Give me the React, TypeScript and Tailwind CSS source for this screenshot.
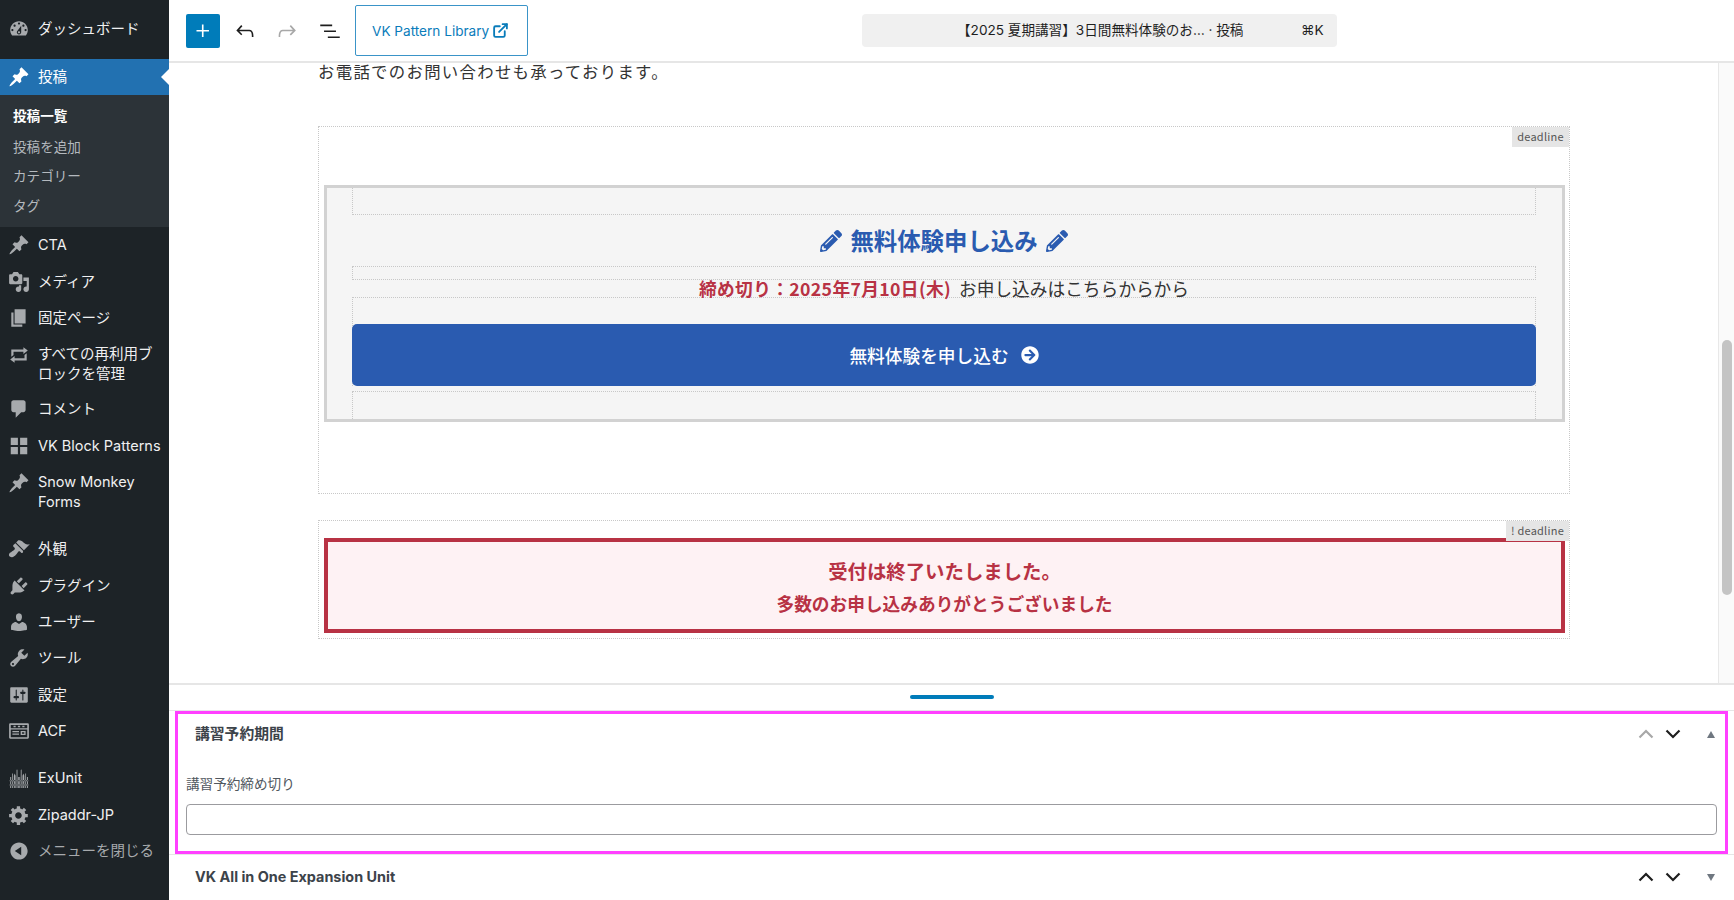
import React from "react";
import { FaPencilAlt, FaArrowCircleRight } from "react-icons/fa";
import { ExternalLink } from "lucide-react";

const D: Record<string, string> = {
  dashboard: "M3.76 16h12.48c1.1-1.37 1.76-3.11 1.76-5 0-4.42-3.58-8-8-8s-8 3.58-8 8c0 1.89.66 3.63 1.76 5zM10 4c.55 0 1 .45 1 1s-.45 1-1 1-1-.45-1-1 .45-1 1-1zM6 6c.55 0 1 .45 1 1s-.45 1-1 1-1-.45-1-1 .45-1 1-1zm8 0c.55 0 1 .45 1 1s-.45 1-1 1-1-.45-1-1 .45-1 1-1zm-5.37 5.55L12 7v6c0 1.1-.9 2-2 2s-2-.9-2-2c0-.57.24-1.08.63-1.45zM4 10c.55 0 1 .45 1 1s-.45 1-1 1-1-.45-1-1 .45-1 1-1zm12 0c.55 0 1 .45 1 1s-.45 1-1 1-1-.45-1-1 .45-1 1-1zm-5 3c0-.55-.45-1-1-1s-1 .45-1 1 .45 1 1 1 1-.45 1-1z",
  pin: "M10.44 3.02l1.82-1.82 6.36 6.35-1.83 1.82c-1.05-.68-2.48-.57-3.41.36l-.75.75c-.92.93-1.04 2.35-.35 3.41l-1.83 1.82-2.41-2.41-2.8 2.79c-.42.42-3.38 2.71-3.8 2.29s1.86-3.39 2.28-3.81l2.79-2.79L4.1 9.36l1.83-1.82c1.05.69 2.48.57 3.4-.36l.75-.75c.93-.92 1.05-2.35.36-3.41z",
  media: "M13 11V4c0-.55-.45-1-1-1h-1.67L9 1H5L3.67 3H2c-.55 0-1 .45-1 1v7c0 .55.45 1 1 1h10c.55 0 1-.45 1-1zM7 4.5c1.38 0 2.5 1.12 2.5 2.5S8.38 9.5 7 9.5 4.5 8.38 4.5 7 5.62 4.5 7 4.5zM14 6h5v10.5c0 1.38-1.12 2.5-2.5 2.5S14 17.88 14 16.5s1.12-2.5 2.5-2.5c.17 0 .34.02.5.05V9h-3V6zm-4 8.05V13h2v3.5c0 1.38-1.12 2.5-2.5 2.5S7 17.88 7 16.5 8.12 14 9.5 14c.17 0 .34.02.5.05z",
  page: "M6 15V2h10v13H6zm-1 1h8v2H3V5h2v11z",
  repeat: "M5 7v3l-2 1.5V5h11V3l4 3.01L14 9V7H5zm10 6v-3l2-1.5V15H6v2l-4-3.01L6 11v2h9z",
  comment: "M5 2h9c1.1 0 2 .9 2 2v7c0 1.1-.9 2-2 2h-2l-5 5v-5H5c-1.1 0-2-.9-2-2V4c0-1.1.9-2 2-2z",
  grid: "M2.5 2.5h6.5v6.5H2.5zM11 2.5h6.5v6.5H11zM2.5 11h6.5v6.5H2.5zM11 11h6.5v6.500H11z",
  brush: "M14.48 11.06L7.41 3.99l1.5-1.5c.5-.56 2.3-.47 3.51.32 1.21.8 1.43 1.28 2.91 2.1 1.18.64 2.45 1.26 4.45.85zm-.71.71L6.7 4.7 4.93 6.47c-.39.39-.39 1.02 0 1.41l1.06 1.06c.39.39.39 1.03 0 1.42-.6.6-1.43 1.11-2.21 1.69-.35.26-.7.53-1.01.84C1.43 13.23 0 15.2 1.6 16.8c.52.52 1.27.74 1.97.74 1.42-.07 2.77-1.42 3.41-2.06.31-.31.58-.66.84-1.01.58-.78 1.09-1.61 1.69-2.21.39-.39 1.03-.39 1.42 0l1.06 1.06c.39.39 1.02.39 1.41 0z",
  plugin: "M13.11 4.36L9.87 7.6 8 5.73l3.24-3.24c.35-.34 1.05-.2 1.56.32.52.51.66 1.21.31 1.55zm-8 1.77l.91-1.12 9.01 9.01-1.19.84c-.71.71-2.63 1.16-3.82 1.16H6.14L4.9 17.26c-.59.59-1.54.59-2.12 0-.59-.58-.59-1.53 0-2.12l1.24-1.24v-3.88c0-1.13.4-3.19 1.09-3.89zm7.26 3.97l3.24-3.24c.34-.35 1.04-.21 1.55.31.52.51.66 1.21.31 1.55l-3.24 3.25z",
  user: "M10 9.25c-2.27 0-2.73-3.44-2.73-3.44C7 4.02 7.82 2 9.97 2c2.16 0 2.98 2.02 2.71 3.81 0 0-.41 3.44-2.68 3.44zm0 2.57L12.72 10c2.39 0 4.52 2.33 4.52 4.53v2.49s-3.65 1.13-7.24 1.13c-3.65 0-7.24-1.13-7.24-1.13v-2.49c0-2.25 1.94-4.48 4.47-4.48z",
  tool: "M16.68 9.77c-1.34 1.34-3.3 1.67-4.95.99l-5.41 6.52c-.99.99-2.59.99-3.58 0s-.99-2.59 0-3.57l6.52-5.42c-.68-1.65-.35-3.61.99-4.95 1.28-1.28 3.12-1.62 4.72-1.06l-2.89 2.89 2.82 2.82 2.86-2.87c.53 1.58.18 3.39-1.08 4.65zM3.81 16.21c.4.39 1.04.39 1.43 0 .4-.4.4-1.04 0-1.43-.39-.4-1.03-.4-1.43 0-.39.39-.39 1.03 0 1.43z",
  settings: "M18 16V4c0-.55-.45-1-1-1H3c-.55 0-1 .45-1 1v12c0 .55.45 1 1 1h14c.55 0 1-.45 1-1zM8 11h1c.55 0 1 .45 1 1s-.45 1-1 1H8v1.5c0 .28-.22.5-.5.5s-.5-.22-.5-.5V13H6c-.55 0-1-.45-1-1s.45-1 1-1h1V5.5c0-.28.22-.5.5-.5s.5.22.5.5V11zm5-2h-1c-.55 0-1-.45-1-1s.45-1 1-1h1V5.5c0-.28.22-.5.5-.5s.5.22.5.5V7h1c.55 0 1 .45 1 1s-.45 1-1 1h-1v5.5c0 .28-.22.5-.5.5s-.5-.22-.5-.5V9z",
  acf: "M2 3h16a1 1 0 0 1 1 1v12a1 1 0 0 1-1 1H2a1 1 0 0 1-1-1V4a1 1 0 0 1 1-1zm.5 1.500v3h15v-3zM5 5.300h2v1.400H5zm4 0h2v1.400H9zm4 0h2v1.400h-2zM2.500 8.700v7h15v-7zM4 10h6v1.200H4zm0 2.300h6v1.200H4zM11.500 10H16v3.600h-4.500zm1.200 1.100v1.400h2.100v-1.400z",
  exunit: "M2 19V9h.9v10zM3.700 19V6h.7v13zM5.300 19V8l.8-2 .8 2v11h-.7v-5h-.2v5zM7.800 19V3l.4-1 .4 1v16zM9.100 19V9h.7v10zM10.300 19V9h.7v10zM11.600 19V3l.4-1 .4 1v16zM13.200 19V8l.8-2 .8 2v11h-.7v-5h-.2v5zM15.700 19V6h.7v13zM17.200 19V9h.9v10zM1.500 12h17v1h-17zM1.500 16h17v.8h-17z",
  gear: "M18 12h-2.18c-.17.7-.44 1.35-.81 1.93l1.54 1.54-2.1 2.1-1.54-1.54c-.58.36-1.23.63-1.91.79V19H8v-2.18c-.68-.16-1.33-.43-1.91-.79l-1.54 1.54-2.12-2.12 1.54-1.54c-.36-.58-.63-1.23-.79-1.91H1V9.03h2.17c.16-.7.44-1.35.8-1.94L2.43 5.55l2.1-2.1 1.54 1.54c.58-.37 1.24-.64 1.93-.81V2h3v2.18c.68.16 1.33.43 1.91.79l1.54-1.54 2.12 2.12-1.54 1.54c.36.59.64 1.24.8 1.94H18V12zm-8.5 1.5c1.66 0 3-1.34 3-3s-1.34-3-3-3-3 1.34-3 3 1.34 3 3 3z",
  collapse: "M10 2.16c4.33 0 7.84 3.51 7.84 7.84s-3.51 7.84-7.84 7.84S2.16 14.33 2.16 10 5.71 2.16 10 2.16zm2 11.72V6.12L6.18 9.97z",
};

function Dash({ name, className = "" }: { name: string; className?: string }) {
  return (
    <svg viewBox="0 0 20 20" className={`w-[22px] h-[22px] shrink-0 fill-current ${className}`}>
      <path d={D[name]} fillRule="evenodd" />
    </svg>
  );
}

function Row({ icon, h = "h-[36.4px]", two = false, children, muted = false }: { icon: string; h?: string; two?: boolean; children: React.ReactNode; muted?: boolean }) {
  return (
    <div className={`flex ${h} pl-[8px] ${two ? "items-start pt-[8px]" : "items-center"}`}>
      <Dash name={icon} className="text-[#a7aaad]" />
      <div className={`ml-[8px] text-[14.5px] leading-[20px] w-[126px] ${muted ? "text-[#a7aaad]" : "text-[#f0f0f1]"}`}>{children}</div>
    </div>
  );
}

function Sidebar() {
  return (
    <aside className="w-[169px] shrink-0 bg-[#1d2327] h-full font-['Inter','Noto_Sans_CJK_JP',sans-serif]">
      <div className="pt-[11px] h-[59px]">
        <Row icon="dashboard">ダッシュボード</Row>
      </div>
      <div className="relative flex h-[36px] items-center pl-[8px] bg-[#2271b1]">
        <Dash name="pin" className="text-white" />
        <span className="ml-[8px] text-[14.5px] text-white">投稿</span>
        <span className="absolute right-0 top-[10px] w-0 h-0 border-y-[8px] border-y-transparent border-r-[8px] border-r-white" />
      </div>
      <div className="bg-[#2c3338] h-[132px] pt-[6px] pl-[13px] text-[13.6px] text-[#b4b9be]">
        <div className="h-[30px] leading-[30px] font-bold text-white">投稿一覧</div>
        <div className="h-[30px] leading-[32px]">投稿を追加</div>
        <div className="h-[29px] leading-[31px]">カテゴリー</div>
        <div className="h-[30px] leading-[32px]">タグ</div>
      </div>
      <Row icon="pin">CTA</Row>
      <Row icon="media">メディア</Row>
      <Row icon="page">固定ページ</Row>
      <Row icon="repeat" h="h-[55px]" two>すべての再利用ブロックを管理</Row>
      <Row icon="comment">コメント</Row>
      <Row icon="grid"><span className="whitespace-nowrap">VK Block Patterns</span></Row>
      <Row icon="pin" h="h-[56px]" two>Snow Monkey Forms</Row>
      <div className="h-[11px]" />
      <Row icon="brush">外観</Row>
      <Row icon="plugin">プラグイン</Row>
      <Row icon="user">ユーザー</Row>
      <Row icon="tool">ツール</Row>
      <Row icon="settings">設定</Row>
      <Row icon="acf">ACF</Row>
      <div className="h-[11px]" />
      <Row icon="exunit">ExUnit</Row>
      <Row icon="gear">Zipaddr-JP</Row>
      <Row icon="collapse" muted>メニューを閉じる</Row>
    </aside>
  );
}

function WpIcon({ d, className = "" }: { d: string; className?: string }) {
  return (
    <svg viewBox="0 0 24 24" className={`w-[26px] h-[26px] shrink-0 fill-current ${className}`}>
      <path d={d} />
    </svg>
  );
}

function Header() {
  return (
    <header className="h-[63px] shrink-0 border-b-[2px] border-[#e6e6e6] flex items-center pl-[17px] font-['Inter','Noto_Sans_CJK_JP',sans-serif]">
      <div className="w-[34px] h-[34px] bg-[#007cba] rounded-[2px] flex items-center justify-center text-white">
        <WpIcon d="M11 12.5V17.5H12.5V12.5H17.5V11H12.5V6H11V11H6V12.5H11Z" />
      </div>
      <WpIcon className="ml-[12px] text-[#1e1e1e]" d="M18.3 11.7c-.6-.6-1.4-.9-2.3-.9H6.7l2.9-3.3-1.1-1-4.5 5L8.5 16l1-1-2.7-2.7H16c.5 0 .9.2 1.3.5 1 1 1 3.4 1 4.5v.3h1.5v-.2c0-1.5 0-4.3-1.5-5.7z" />
      <WpIcon className="ml-[16px] text-[#a8a8a8]" d="M15.6 6.5l-1.1 1 2.9 3.3H8c-.9 0-1.7.3-2.3.9-1.4 1.5-1.4 4.2-1.4 5.6v.2h1.5v-.3c0-1.1 0-3.5 1-4.5.3-.3.7-.5 1.3-.5h9.2L14.5 15l1.1 1.1 4.6-4.6-4.6-5z" />
      <WpIcon className="ml-[17px] text-[#1e1e1e]" d="M3 6h11v1.5H3V6zm3.5 5.5h11V13h-11v-1.5zM21 17H10v1.5h11V17z" />
      <div className="ml-[12px] w-[173px] h-[51px] border-[1.5px] border-[#3a94c8] rounded-[2px] flex items-center pl-[16px] text-[#0a7cba] text-[13.6px]">
        <span className="whitespace-nowrap pt-[1px]">VK Pattern Library</span>
        <ExternalLink className="w-[17px] h-[17px] ml-[3px]" strokeWidth={2.6} />
      </div>
      <div className="ml-[334px] w-[475px] h-[33px] bg-[#f0f0f0] rounded-[4px] flex items-center text-[#1e1e1e] text-[13.6px]">
        <span className="ml-[95px] w-[344px] whitespace-nowrap">【2025 夏期講習】3日間無料体験のお… · 投稿</span>
        <span className="text-[13.6px]">⌘K</span>
      </div>
    </header>
  );
}

function Tag({ children, className = "" }: { children: React.ReactNode; className?: string }) {
  return (
    <span className={`absolute top-0 right-0 h-[20px] bg-[#e5e5e5] text-[#555] text-[11px] leading-[18px] tracking-[0.02em] text-center ${className}`}>{children}</span>
  );
}

function Canvas() {
  const dotted = "border border-dotted border-[#c8c8c8]";
  return (
    <div className="flex-1 min-w-0 pl-[149px] pr-[148px] font-['Noto_Sans_CJK_JP','Noto_Sans',sans-serif] text-[#333]">
      <p className="h-[18px] leading-[16px] text-[16.4px] tracking-[1.3px] whitespace-nowrap">お電話でのお問い合わせも承っております。</p>
      <div className={`relative mt-[45px] h-[368px] ${dotted} pt-[58px] pl-[5px] pr-[4px]`}>
        <Tag className="w-[57px]">deadline</Tag>
        <div className="h-[237px] border-[3px] border-[#d2d2d2] bg-[#f5f5f5] pl-[25px] pr-[26px]">
          <div className={`h-[27px] ${dotted} border-t-0`} />
          <div className="h-[51px] flex items-center justify-center gap-[8px] text-[#2a5bb0] font-bold text-[23.4px]">
            <FaPencilAlt className="w-[22px] h-[22px]" />
            <span>無料体験申し込み</span>
            <FaPencilAlt className="w-[22px] h-[22px]" />
          </div>
          <div className={`h-[14px] ${dotted}`} />
          <div className="h-[17px] leading-[17px] text-center text-[17.7px] whitespace-nowrap">
            <span className="font-bold text-[#b83244] tracking-[0.02em]">締め切り：2025年7月10日(木)</span>
            <span className="ml-[8px]">お申し込みはこちらからから</span>
          </div>
          <div className={`h-[89px] ${dotted} border-b-0 pt-[26px]`}>
            <div className="-mx-px h-[62px] bg-[#2a5bb0] rounded-[5px] flex items-center justify-center text-white text-[17.7px] font-medium">
              <span>無料体験を申し込む</span>
              <FaArrowCircleRight className="w-[18px] h-[18px] ml-[12px]" />
            </div>
          </div>
          <div className={`mt-[5px] h-[28px] ${dotted} border-b-0`} />
        </div>
      </div>
      <div className={`relative mt-[26px] h-[119px] ${dotted} pt-[17px] pl-[5px] pr-[4px]`}>
        <div className="h-[95px] border-[4px] border-[#b83244] bg-[#fef2f4] text-[#b83244] font-bold text-center pt-[14px]">
          <div className="h-[30px] leading-[30px] text-[19.4px]">受付は終了いたしました。</div>
          <div className="mt-[3px] h-[28px] leading-[28px] text-[17.7px]">多数のお申し込みありがとうございました</div>
        </div>
        <Tag className="w-[63px] bg-[#e5e5e5]">! deadline</Tag>
      </div>
    </div>
  );
}

function Chevron({ up = false, className = "" }: { up?: boolean; className?: string }) {
  return (
    <svg viewBox="0 0 16 10" className={`w-[16px] h-[10px] fill-none stroke-current stroke-[2.2] ${className}`}>
      <path d={up ? "M1.5 8.5 8 2l6.500 6.500" : "M1.5 1.500 8 8l6.500-6.500"} />
    </svg>
  );
}

function Tri({ up = false }: { up?: boolean }) {
  return (
    <svg viewBox="0 0 8 7" className="ml-[26px] w-[8px] h-[7px] fill-[#6f7780]">
      <path d={up ? "M4 0 8 7H0z" : "M0 0h8L4 7z"} />
    </svg>
  );
}

function Controls({ disabledUp = false }: { disabledUp?: boolean }) {
  return (
    <div className="flex items-center">
      <Chevron up className={disabledUp ? "text-[#a8a8a8]" : "text-[#1e1e1e]"} />
      <Chevron className="ml-[11px] text-[#1e1e1e]" />
    </div>
  );
}

function Bottom() {
  return (
    <div className="flex-1 min-h-0 font-['Inter','Noto_Sans_CJK_JP',sans-serif]">
      <div className="h-[27px] border-t-[2px] border-[#e6e6e6] flex justify-center pt-[10px]">
        <div className="w-[84px] h-[4px] rounded-full bg-[#007cba]" />
      </div>
      <div className="border-t border-[#e6e6e6]">
        <div className="mx-[6px] h-[143px] border-[3px] border-[#ff40ff]">
          <div className="h-[40px] flex items-center pl-[17px] pr-[10px]">
            <span className="flex-1 font-bold text-[14.8px] text-[#3c434a]">講習予約期間</span>
            <Controls disabledUp />
            <Tri up />
          </div>
          <div className="mt-[20px] h-[20px] leading-[20px] pl-[8px] text-[13.6px] text-[#50575e]">講習予約締め切り</div>
          <div className="mx-[8px] mt-[10px] h-[31px] border-[1.5px] border-[#9b9b9f] rounded-[4px] bg-white" />
        </div>
      </div>
      <div className="border-t border-[#e6e6e6] h-[45px] flex items-center pl-[26px] pr-[19px]">
        <span className="flex-1 font-bold text-[14.4px] text-[#3c434a]">VK All in One Expansion Unit</span>
        <Controls />
        <Tri />
      </div>
    </div>
  );
}

export default function App() {
  return (
    <div className="w-[1734px] h-[900px] flex overflow-hidden bg-white">
      <Sidebar />
      <main className="flex-1 min-w-0 flex flex-col">
        <Header />
        <div className="h-[620px] shrink-0 flex">
          <Canvas />
          <div className="w-[16px] shrink-0 bg-[#fafafa] border-l border-[#e8e8e8] pt-[277px] pl-[3px]">
            <div className="w-[10px] h-[255px] rounded-full bg-[#c4c4c4]" />
          </div>
        </div>
        <Bottom />
      </main>
    </div>
  );
}
